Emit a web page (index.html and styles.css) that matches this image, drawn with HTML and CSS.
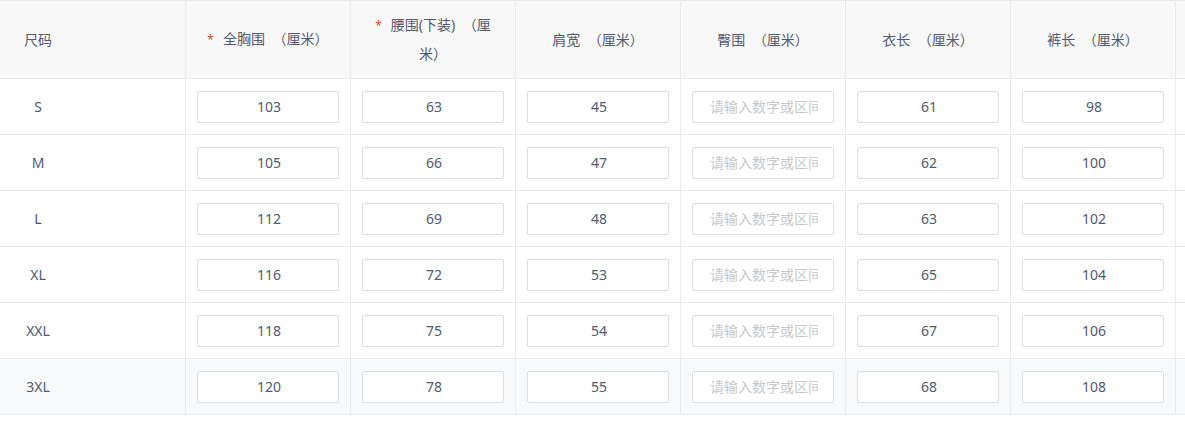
FILE: index.html
```html
<!DOCTYPE html>
<html lang="zh-CN">
<head>
    <meta charset="UTF-8">
    <title>尺码表</title>
    <link rel="stylesheet" href="styles.css">
</head>
<body>
    <div class="size-table">
        <div class="th first"><span class="size-label">尺码</span></div>
        <div class="th"><span><i class="req">*</i>全胸围 （厘米）</span></div>
        <div class="th"><span><i class="req">*</i>腰围(下装) （厘米）</span></div>
        <div class="th"><span>肩宽 （厘米）</span></div>
        <div class="th"><span>臀围 （厘米）</span></div>
        <div class="th"><span>衣长 （厘米）</span></div>
        <div class="th"><span>裤长 （厘米）</span></div>
        <div class="th"></div>

        <div class="row">
            <div class="td first"><span class="size-label">S</span></div>
            <div class="td"><input class="num" value="103"></div>
            <div class="td"><input class="num" value="63"></div>
            <div class="td"><input class="num" value="45"></div>
            <div class="td"><input class="num" placeholder="请输入数字或区间"></div>
            <div class="td"><input class="num" value="61"></div>
            <div class="td"><input class="num" value="98"></div>
            <div class="td"></div>
        </div>
        <div class="row">
            <div class="td first"><span class="size-label">M</span></div>
            <div class="td"><input class="num" value="105"></div>
            <div class="td"><input class="num" value="66"></div>
            <div class="td"><input class="num" value="47"></div>
            <div class="td"><input class="num" placeholder="请输入数字或区间"></div>
            <div class="td"><input class="num" value="62"></div>
            <div class="td"><input class="num" value="100"></div>
            <div class="td"></div>
        </div>
        <div class="row">
            <div class="td first"><span class="size-label">L</span></div>
            <div class="td"><input class="num" value="112"></div>
            <div class="td"><input class="num" value="69"></div>
            <div class="td"><input class="num" value="48"></div>
            <div class="td"><input class="num" placeholder="请输入数字或区间"></div>
            <div class="td"><input class="num" value="63"></div>
            <div class="td"><input class="num" value="102"></div>
            <div class="td"></div>
        </div>
        <div class="row">
            <div class="td first"><span class="size-label">XL</span></div>
            <div class="td"><input class="num" value="116"></div>
            <div class="td"><input class="num" value="72"></div>
            <div class="td"><input class="num" value="53"></div>
            <div class="td"><input class="num" placeholder="请输入数字或区间"></div>
            <div class="td"><input class="num" value="65"></div>
            <div class="td"><input class="num" value="104"></div>
            <div class="td"></div>
        </div>
        <div class="row">
            <div class="td first"><span class="size-label">XXL</span></div>
            <div class="td"><input class="num" value="118"></div>
            <div class="td"><input class="num" value="75"></div>
            <div class="td"><input class="num" value="54"></div>
            <div class="td"><input class="num" placeholder="请输入数字或区间"></div>
            <div class="td"><input class="num" value="67"></div>
            <div class="td"><input class="num" value="106"></div>
            <div class="td"></div>
        </div>
        <div class="row hover">
            <div class="td first"><span class="size-label">3XL</span></div>
            <div class="td"><input class="num" value="120"></div>
            <div class="td"><input class="num" value="78"></div>
            <div class="td"><input class="num" value="55"></div>
            <div class="td"><input class="num" placeholder="请输入数字或区间"></div>
            <div class="td"><input class="num" value="68"></div>
            <div class="td"><input class="num" value="108"></div>
            <div class="td"></div>
        </div>
    </div>
</body>
</html>
```

FILE: styles.css
```css
* {
    box-sizing: border-box;
    margin: 0;
    padding: 0;
}

body {
    font-family: "Noto Sans", "Noto Sans CJK SC", sans-serif;
    font-size: 14px;
    color: #515a6e;
    background-color: #fff;
    overflow: hidden;
}

.size-table {
    display: grid;
    grid-template-columns: 186px repeat(7, 165px);
    border-top: 1px solid #e8eaec;
    width: max-content;
}

.row {
    display: contents;
}

.th,
.td {
    border-right: 1px solid #e8eaec;
    border-bottom: 1px solid #e8eaec;
    display: flex;
    align-items: center;
}

.th {
    height: 78px;
    background-color: #f8f8f9;
    justify-content: center;
    text-align: center;
    padding: 0 16px;
    line-height: 28px;
    word-spacing: 4px;
}

.td {
    height: 56px;
    padding: 0 11px;
}

.row.hover .td {
    background-color: #f8f9fb;
}

.th.first,
.td.first {
    justify-content: flex-start;
    padding: 0 0 0 24px;
}

.size-label {
    display: inline-block;
    min-width: 28px;
    text-align: center;
}

.req {
    font-style: normal;
    color: #ed4014;
    font-size: 12px;
    margin-right: 9px;
}

.num {
    width: 100%;
    height: 32px;
    border: 1px solid #dcdee2;
    border-radius: 2px;
    background-color: #fff;
    font-family: inherit;
    font-size: 14px;
    color: #515a6e;
    text-align: center;
    padding: 0 15px 0 17px;
    outline: none;
}

.num::placeholder {
    color: #c5c8ce;
}
```
